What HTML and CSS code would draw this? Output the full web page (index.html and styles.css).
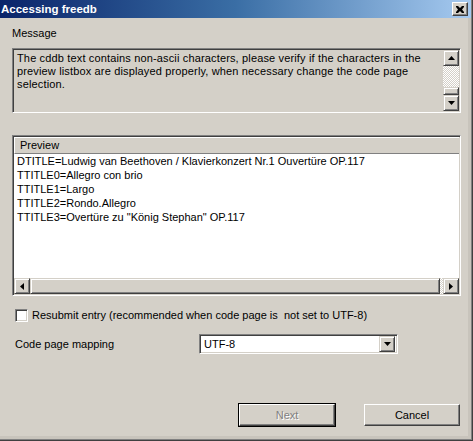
FILE: index.html
```html
<!DOCTYPE html>
<html>
<head>
<meta charset="utf-8">
<link rel="stylesheet" href="styles.css">
</head>
<body>
<div class="window">
  <div class="titlebar">
    <span class="title">Accessing freedb</span>
    <span class="close"><svg width="8" height="7" viewBox="0 0 8 7"><path d="M0 0h2l2 2 2-2h2v1l-2 2.5 2 2.5v1h-2l-2-2-2 2h-2v-1l2-2.5-2-2.5z" fill="#000"/></svg></span>
  </div>
  <div class="content">
    <div class="label msg-label">Message</div>
    <div class="msgbox sunken">
      <div class="msgtext">The cddb text contains non-ascii characters, please verify if the characters in the preview listbox are displayed properly, when necessary change the code page selection.</div>
      <div class="vscroll">
        <div class="sbtn"><svg width="7" height="4" viewBox="0 0 7 4"><polygon points="3.5,0 7,4 0,4" fill="#000"/></svg></div>
        <div class="track vtrack"></div>
        <div class="thumb vthumb"></div>
        <div class="sbtn"><svg width="7" height="4" viewBox="0 0 7 4"><polygon points="0,0 7,0 3.5,4" fill="#000"/></svg></div>
      </div>
    </div>
    <div class="listbox sunken">
      <div class="listheader">Preview</div>
      <div class="listbody">
        <div class="line">DTITLE=Ludwig van Beethoven / Klavierkonzert Nr.1 Ouvertüre OP.117</div>
        <div class="line">TTITLE0=Allegro con brio</div>
        <div class="line">TTITLE1=Largo</div>
        <div class="line">TTITLE2=Rondo.Allegro</div>
        <div class="line">TTITLE3=Overtüre zu "König Stephan" OP.117</div>
      </div>
      <div class="hscroll">
        <div class="sbtn"><svg width="4" height="7" viewBox="0 0 4 7"><polygon points="0,3.5 4,0 4,7" fill="#000"/></svg></div>
        <div class="thumb hthumb"></div>
        <div class="track htrack"></div>
        <div class="sbtn"><svg width="4" height="7" viewBox="0 0 4 7"><polygon points="0,0 4,3.5 0,7" fill="#000"/></svg></div>
      </div>
    </div>
    <div class="checkrow">
      <span class="checkbox"></span>
      <span class="label">Resubmit entry (recommended when code page is&nbsp; not set to UTF-8)</span>
    </div>
    <div class="comborow">
      <span class="label combolabel">Code page mapping</span>
      <div class="combo">
        <span class="combotext">UTF-8</span>
        <span class="ddbtn"><svg width="7" height="4" viewBox="0 0 7 4"><polygon points="0,0 7,0 3.5,4" fill="#000"/></svg></span>
      </div>
    </div>
    <div class="buttons">
      <div class="defframe"><button class="btn disabled">Next</button></div>
      <button class="btn">Cancel</button>
    </div>
  </div>
</div>
</body>
</html>
```

FILE: styles.css
```css
html, body {
  margin: 0;
  padding: 0;
  background: #d4d0c8;
}
body {
  font-family: "Liberation Sans", Arial, sans-serif;
  font-size: 11px;
  color: #000;
}
.window {
  width: 473px;
  height: 441px;
  box-sizing: border-box;
  background: #d4d0c8;
  border-right: 1px solid #404040;
  border-bottom: 1px solid #404040;
  box-shadow: inset -1px -1px 0 #808080, inset -4px -4px 0 #c8c4bc;
  display: flex;
  flex-direction: column;
  overflow: hidden;
}
.titlebar {
  height: 18px;
  margin-right: 1px;
  background: linear-gradient(to right, #0a246a 0%, #3a6ea5 50%, #a6caf0 100%);
  display: flex;
  align-items: center;
  justify-content: space-between;
  padding-left: 1px;
  padding-right: 3px;
}
.title {
  color: #fff;
  font-weight: bold;
  font-size: 11.5px;
}
.close {
  width: 16px;
  height: 14px;
  box-sizing: border-box;
  background: #d4d0c8;
  border-top: 1px solid #fff;
  border-left: 1px solid #fff;
  border-right: 1px solid #404040;
  border-bottom: 1px solid #404040;
  box-shadow: inset -1px -1px 0 #808080;
  display: flex;
  align-items: center;
  justify-content: center;
  padding-right: 1px;
}
.content {
  padding: 9px 0 0 12px;
  display: flex;
  flex-direction: column;
}
.label {
  line-height: 13px;
  white-space: nowrap;
}
.msg-label {
  height: 13px;
}
.sunken {
  box-sizing: border-box;
  border-top: 1px solid #808080;
  border-left: 1px solid #808080;
  border-right: 1px solid #fff;
  border-bottom: 1px solid #fff;
  box-shadow: inset 1px 1px 0 #404040, inset -1px -1px 0 #d4d0c8;
  padding: 1px;
}
.msgbox {
  margin-top: 8px;
  width: 449px;
  height: 65px;
  display: flex;
}
.msgtext {
  flex: 1;
  padding: 2px 4px 0 3px;
  line-height: 13px;
  letter-spacing: 0.15px;
}
.vscroll {
  width: 16px;
  display: flex;
  flex-direction: column;
}
.sbtn {
  width: 16px;
  height: 16px;
  flex: none;
  box-sizing: border-box;
  background: #d4d0c8;
  border-top: 1px solid #d4d0c8;
  border-left: 1px solid #d4d0c8;
  border-right: 1px solid #404040;
  border-bottom: 1px solid #404040;
  box-shadow: inset 1px 1px 0 #fff, inset -1px -1px 0 #808080;
  display: flex;
  align-items: center;
  justify-content: center;
}
.track {
  background: repeating-conic-gradient(#fff 0 25%, #d4d0c8 0 50%) 0 0 / 2px 2px;
}
.vtrack {
  flex: 1;
}
.thumb {
  box-sizing: border-box;
  background: #d4d0c8;
  border-top: 1px solid #d4d0c8;
  border-left: 1px solid #d4d0c8;
  border-right: 1px solid #404040;
  border-bottom: 1px solid #404040;
  box-shadow: inset 1px 1px 0 #fff, inset -1px -1px 0 #808080;
}
.vthumb {
  height: 8px;
  flex: none;
}
.listbox {
  margin-top: 22px;
  width: 449px;
  height: 161px;
  display: flex;
  flex-direction: column;
  background: #fff;
}
.listheader {
  height: 17px;
  flex: none;
  box-sizing: border-box;
  background: #d4d0c8;
  border-top: 1px solid #fff;
  border-left: 1px solid #fff;
  border-bottom: 1px solid #808080;
  box-shadow: inset 0 -1px 0 #d4d0c8;
  padding-left: 5px;
  line-height: 15px;
}
.listbody {
  flex: 1;
  padding: 0 0 0 3px;
  background: #fff;
}
.line {
  line-height: 14px;
  white-space: nowrap;
}
.hscroll {
  height: 16px;
  flex: none;
  display: flex;
}
.hthumb {
  flex: 1;
}
.htrack {
  width: 3px;
  flex: none;
}
.checkrow {
  margin-top: 13px;
  margin-left: 3px;
  display: flex;
  align-items: center;
  height: 13px;
}
.checkbox {
  width: 13px;
  height: 13px;
  box-sizing: border-box;
  background: #fff;
  border-top: 1px solid #808080;
  border-left: 1px solid #808080;
  border-right: 1px solid #fff;
  border-bottom: 1px solid #fff;
  box-shadow: inset 1px 1px 0 #404040, inset -1px -1px 0 #d4d0c8;
  margin-right: 4px;
}
.comborow {
  margin-top: 12px;
  margin-left: 3px;
  display: flex;
  align-items: center;
  height: 20px;
}
.combolabel {
  width: 184px;
}
.combo {
  width: 199px;
  height: 20px;
  box-sizing: border-box;
  background: #fff;
  border-top: 1px solid #808080;
  border-left: 1px solid #808080;
  border-right: 1px solid #fff;
  border-bottom: 1px solid #fff;
  box-shadow: inset 1px 1px 0 #404040, inset -1px -1px 0 #d4d0c8;
  padding: 2px;
  display: flex;
  align-items: center;
  justify-content: space-between;
}
.combotext {
  padding-left: 2px;
  line-height: 13px;
}
.ddbtn {
  width: 16px;
  height: 16px;
  box-sizing: border-box;
  background: #d4d0c8;
  border-top: 1px solid #d4d0c8;
  border-left: 1px solid #d4d0c8;
  border-right: 1px solid #404040;
  border-bottom: 1px solid #404040;
  box-shadow: inset 1px 1px 0 #fff, inset -1px -1px 0 #808080;
  display: flex;
  align-items: center;
  justify-content: center;
}
.buttons {
  margin-top: 49px;
  display: flex;
  align-items: center;
  padding-left: 226px;
  gap: 28px;
}
.defframe {
  border: 1px solid #000;
  display: flex;
}
.btn {
  width: 96px;
  height: 22px;
  box-sizing: border-box;
  margin: 0;
  padding: 0;
  font-family: "Liberation Sans", Arial, sans-serif;
  font-size: 11px;
  color: #000;
  background: #d4d0c8;
  border-top: 1px solid #fff;
  border-left: 1px solid #fff;
  border-right: 1px solid #404040;
  border-bottom: 1px solid #404040;
  box-shadow: inset -1px -1px 0 #808080;
  border-radius: 0;
}
.btn.disabled {
  color: #808080;
  text-shadow: 1px 1px 0 #fff;
}
```
